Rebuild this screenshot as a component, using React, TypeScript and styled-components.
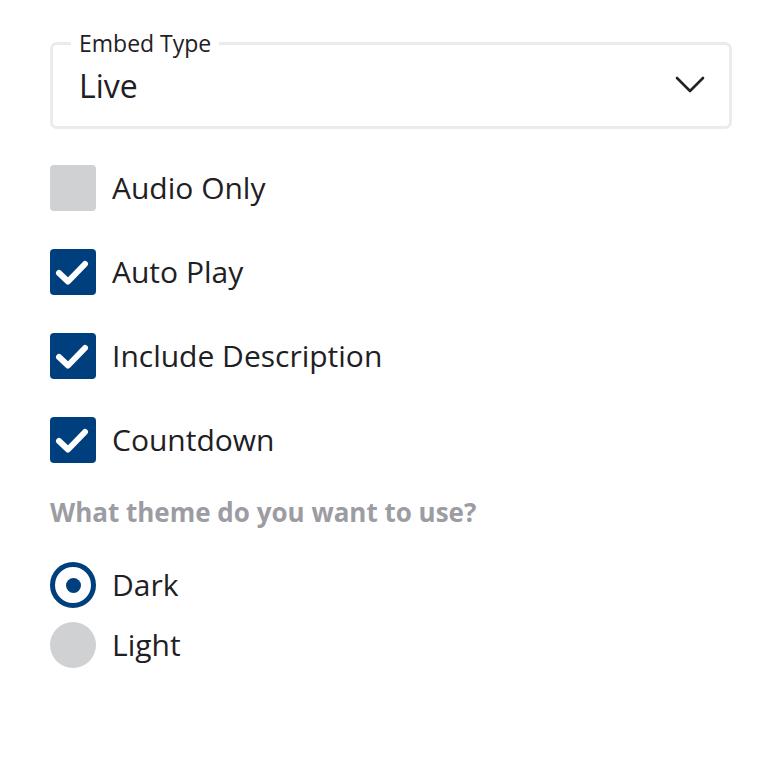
import React, { useState } from "react";
import styled, { createGlobalStyle } from "styled-components";

const GlobalStyle = createGlobalStyle`
  body {
    margin: 0;
    background: #ffffff;
    font-family: "Open Sans", "Noto Sans", sans-serif;
    color: #1f2024;
  }
`;

const color = {
  Navy: "#003f7d",
  Gray: "#d0d1d3",
  Border: "#ebebeb",
  Text: "#1f2024",
  Muted: "#9c9ca3",
};

const Page = styled.div`
  padding: 31px 29px 0 50px;
  width: 682px;
`;

const SelectBox = styled.fieldset`
  margin: 0;
  padding: 0 24px 11px 18px;
  border: 3px solid ${color.Border};
  border-radius: 7px;
  cursor: pointer;
`;

const Legend = styled.legend`
  padding: 0 8px;
  font-size: 23px;
  line-height: 24px;
  color: ${color.Text};
`;

const SelectRow = styled.div`
  display: flex;
  align-items: center;
  justify-content: space-between;
  height: 60px;
  padding-left: 8px;
  font-size: 32px;
`;

const OptionList = styled.div`
  display: flex;
  flex-direction: column;
  gap: 38px;
  margin-top: 36px;
`;

const CheckRow = styled.label`
  display: flex;
  align-items: center;
  gap: 16px;
  font-size: 30px;
  line-height: 36px;
  cursor: pointer;
`;

const Box = styled.span<{ checked?: boolean }>`
  display: flex;
  align-items: center;
  justify-content: center;
  width: 46px;
  height: 46px;
  border-radius: 4px;
  background-color: ${(p) => (p.checked ? color.Navy : color.Gray)};
`;

const Question = styled.div`
  margin-top: 34px;
  font-size: 26px;
  line-height: 30px;
  font-weight: 700;
  color: ${color.Muted};
`;

const RadioList = styled.div`
  display: flex;
  flex-direction: column;
  gap: 14px;
  margin-top: 35px;
`;

const Radio = styled.span<{ checked?: boolean }>`
  display: flex;
  align-items: center;
  justify-content: center;
  box-sizing: border-box;
  width: 46px;
  height: 46px;
  border-radius: 50%;
  background-color: ${(p) => (p.checked ? "#ffffff" : color.Gray)};
  border: ${(p) => (p.checked ? `5px solid ${color.Navy}` : "none")};

  &::after {
    content: "";
    display: ${(p) => (p.checked ? "block" : "none")};
    width: 15px;
    height: 15px;
    border-radius: 50%;
    background-color: ${color.Navy};
  }
`;

const Check = () => (
  <svg width="46" height="46" viewBox="0 0 46 46">
    <polyline
      points="9,24 18,32.5 35,15"
      fill="none"
      stroke="#ffffff"
      strokeWidth="6"
      strokeLinecap="round"
      strokeLinejoin="round"
    />
  </svg>
);

const Chevron = () => (
  <svg width="30" height="18" viewBox="0 0 30 18">
    <polyline
      points="2,2 15,15 28,2"
      fill="none"
      stroke="#222326"
      strokeWidth="2.6"
      strokeLinecap="round"
      strokeLinejoin="round"
    />
  </svg>
);

const options = ["Audio Only", "Auto Play", "Include Description", "Countdown"];

export default function App() {
  const [checks, setChecks] = useState<Record<string, boolean>>({
    "Audio Only": false,
    "Auto Play": true,
    "Include Description": true,
    Countdown: true,
  });
  const [theme, setTheme] = useState("Dark");

  return (
    <Page>
      <GlobalStyle />
      <SelectBox>
        <Legend>Embed Type</Legend>
        <SelectRow>
          <span>Live</span>
          <Chevron />
        </SelectRow>
      </SelectBox>

      <OptionList>
        {options.map((o) => (
          <CheckRow
            key={o}
            onClick={() => setChecks({ ...checks, [o]: !checks[o] })}
          >
            <Box checked={checks[o]}>{checks[o] && <Check />}</Box>
            {o}
          </CheckRow>
        ))}
      </OptionList>

      <Question>What theme do you want to use?</Question>

      <RadioList>
        {["Dark", "Light"].map((t) => (
          <CheckRow key={t} onClick={() => setTheme(t)}>
            <Radio checked={theme === t} />
            {t}
          </CheckRow>
        ))}
      </RadioList>
    </Page>
  );
}
